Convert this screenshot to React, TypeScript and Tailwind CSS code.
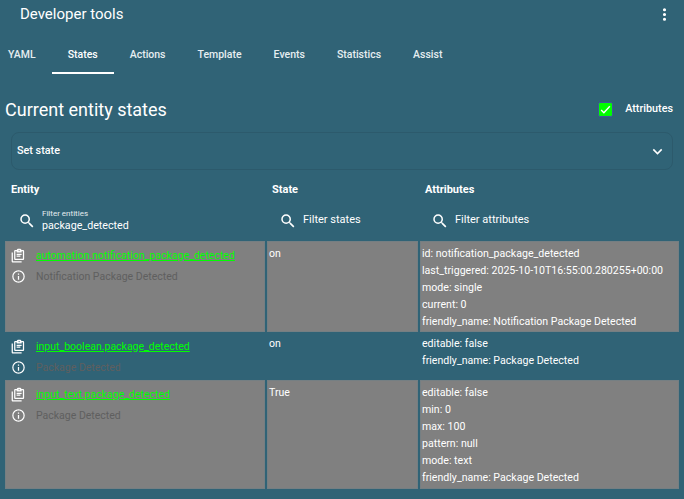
const P = {
  magnify: "M9.5,3A6.5,6.5 0 0,1 16,9.5C16,11.11 15.41,12.59 14.44,13.73L14.71,14H15.5L20.5,19L19,20.5L14,15.5V14.71L13.73,14.44C12.59,15.41 11.11,16 9.5,16A6.5,6.5 0 0,1 3,9.5A6.5,6.5 0 0,1 9.5,3M9.5,5C7,5 5,7 5,9.5C5,12 7,14 9.5,14C12,14 14,12 14,9.5C14,7 12,5 9.5,5Z",
  dots: "M12,16A2,2 0 0,1 14,18A2,2 0 0,1 12,20A2,2 0 0,1 10,18A2,2 0 0,1 12,16M12,10A2,2 0 0,1 14,12A2,2 0 0,1 12,14A2,2 0 0,1 10,12A2,2 0 0,1 12,10M12,4A2,2 0 0,1 14,6A2,2 0 0,1 12,8A2,2 0 0,1 10,6A2,2 0 0,1 12,4Z",
  info: "M11,9H13V7H11M12,20C7.59,20 4,16.41 4,12C4,7.59 7.59,4 12,4C16.41,4 20,7.59 20,12C20,16.41 16.41,20 12,20M12,2A10,10 0 0,0 2,12A10,10 0 0,0 12,22A10,10 0 0,0 22,12A10,10 0 0,0 12,2M11,17H13V11H11V17Z",
  chevron: "M7.41,8.58L12,13.17L16.59,8.58L18,10L12,16L6,10L7.41,8.58Z",
  clip: "M3 7V21H17V23H3C1.9 23 1 22.1 1 21V7H3ZM19 3C20.1 3 21 3.9 21 5V17C21 18.1 20.1 19 19 19H7C5.9 19 5 18.1 5 17V5C5 3.9 5.9 3 7 3H9.2C9.6 1.8 10.7 1 12 1H14C15.3 1 16.4 1.8 16.8 3H19ZM13 3C12.45 3 12 3.45 12 4S12.45 5 13 5 14 4.55 14 4 13.55 3 13 3ZM7 5V17H19V5H17V7H9V5H7ZM9 9H17V11H9V9ZM9 12H15V14H9V12Z",
};

function Icon({ d, className }: { d: string; className: string }) {
  return (
    <svg viewBox="0 0 24 24" className={className} fill="currentColor">
      <path d={d} fillRule="evenodd" />
    </svg>
  );
}

const tabs = ["YAML", "States", "Actions", "Template", "Events", "Statistics", "Assist"];

const rows = [
  {
    id: "automation.notification_package_detected",
    name: "Notification Package Detected",
    state: "on",
    attrs: [
      "id: notification_package_detected",
      "last_triggered: 2025-10-10T16:55:00.280255+00:00",
      "mode: single",
      "current: 0",
      "friendly_name: Notification Package Detected",
    ],
    grey: true,
    top: "pt-[3px]",
    pad: "pb-[1px]",
  },
  {
    id: "input_boolean.package_detected",
    name: "Package Detected",
    state: "on",
    attrs: ["editable: false", "friendly_name: Package Detected"],
    grey: false,
    top: "pt-[2px]",
    pad: "pb-[1px]",
  },
  {
    id: "input_text.package_detected",
    name: "Package Detected",
    state: "True",
    attrs: [
      "editable: false",
      "min: 0",
      "max: 100",
      "pattern: null",
      "mode: text",
      "friendly_name: Package Detected",
    ],
    grey: true,
    top: "pt-[3px]",
    pad: "pb-[2px]",
  },
];

function Filter({ label, value, pad }: { label: string; value?: string; pad: string }) {
  return (
    <div className={`flex h-[43px] items-center pt-[2px] ${pad}`}>
      <Icon d={P.magnify} className="h-[18px] w-[18px] text-white" />
      {value ? (
        <div className="ml-[6px] flex flex-col">
          <span className="text-[8px] leading-[10px] text-[#e4ecef]">{label}</span>
          <span className="text-[10.7px] leading-[14px] text-white">{value}</span>
        </div>
      ) : (
        <span className="ml-[6px] text-[11px] text-white">{label}</span>
      )}
    </div>
  );
}

export default function App() {
  return (
    <div className="h-[499px] w-[684px] overflow-hidden bg-[#306376] font-['Roboto',sans-serif] text-white">
      <header className="flex h-[28px] items-center justify-between pl-[20px] pr-[10px]">
        <h1 className="text-[15px] font-normal">Developer tools</h1>
        <Icon d={P.dots} className="h-[19px] w-[19px] text-white" />
      </header>
      <nav className="mt-[12px] flex h-[34px]">
        {tabs.map((t, i) => (
          <div
            key={t}
            className={`flex h-[34px] items-center text-[10.5px] font-medium ${i === 0 ? "pl-[8px] pr-[16px]" : "px-[16px]"} ${i === 1 ? "border-b-2 border-white pb-[2px] text-white" : "pb-[4px] text-[#e6eef1]"}`}
          >
            {t}
          </div>
        ))}
      </nav>
      <section className="mt-[20px] flex h-[30px] items-center justify-between pl-[5px] pr-[11px]">
        <h2 className="text-[18px] font-normal">Current entity states</h2>
        <label className="flex items-center gap-[12px]">
          <span className="flex h-[15px] w-[15px] items-center justify-center rounded-[2px] border border-[#3d5a9a] bg-[#00ff00]">
            <svg viewBox="0 0 24 24" className="h-[13px] w-[13px]" fill="none" stroke="white" strokeWidth="2.5">
              <path d="M4 13l5 5L20 6" />
            </svg>
          </span>
          <span className="text-[10.8px] font-medium">Attributes</span>
        </label>
      </section>
      <div className="mx-[11px] mt-[8px] flex h-[38px] items-center justify-between rounded-[8px] border border-[#2c5a6c] pl-[5px] pr-[5px]">
        <span className="text-[10.8px] font-medium">Set state</span>
        <Icon d={P.chevron} className="h-[19px] w-[19px]" />
      </div>
      <div className="mt-[12px] grid grid-cols-[260px_151px_259px] gap-x-[2px] pl-[5px]">
        <div className="flex h-[16px] items-center pl-[6px] pt-[1px] text-[11px] font-bold">Entity</div>
        <div className="flex h-[16px] items-center pl-[5px] pt-[1px] text-[11px] font-bold">State</div>
        <div className="flex h-[16px] items-center pl-[5px] pt-[1px] text-[11px] font-bold">Attributes</div>
        <Filter label="Filter entities" value="package_detected" pad="pl-[13px]" />
        <Filter label="Filter states" pad="pl-[12px]" />
        <Filter label="Filter attributes" pad="pl-[11px]" />
        {rows.map((r) => {
          const bg = r.grey ? "border border-[#757f83] bg-[#808080]" : "border border-transparent";
          return (
            <div key={r.id} className="contents">
              <div className={`${bg} flex min-h-[48px] flex-col pt-[3px]`}>
                <div className="flex h-[21px] items-center pl-[5px]">
                  <Icon d={P.clip} className="h-[15px] w-[15px] text-white" />
                  <a className="ml-[10px] text-[10.5px] text-[#00ff00] underline">{r.id}</a>
                </div>
                <div className="flex h-[21px] items-center pl-[5px]">
                  <Icon d={P.info} className="h-[15px] w-[15px] text-white" />
                  <span className="ml-[10px] text-[10.5px] text-[#5f5f5f]">{r.name}</span>
                </div>
              </div>
              <div className={`${bg} pl-[1px] pr-[2px] ${r.top} text-[10.5px] leading-[17px]`}>{r.state}</div>
              <div className={`${bg} pl-[1px] pr-[2px] ${r.top} ${r.pad} text-[10.6px] leading-[17px]`}>
                {r.attrs.map((a) => (
                  <div key={a} className="whitespace-nowrap">{a}</div>
                ))}
              </div>
            </div>
          );
        })}
      </div>
    </div>
  );
}
